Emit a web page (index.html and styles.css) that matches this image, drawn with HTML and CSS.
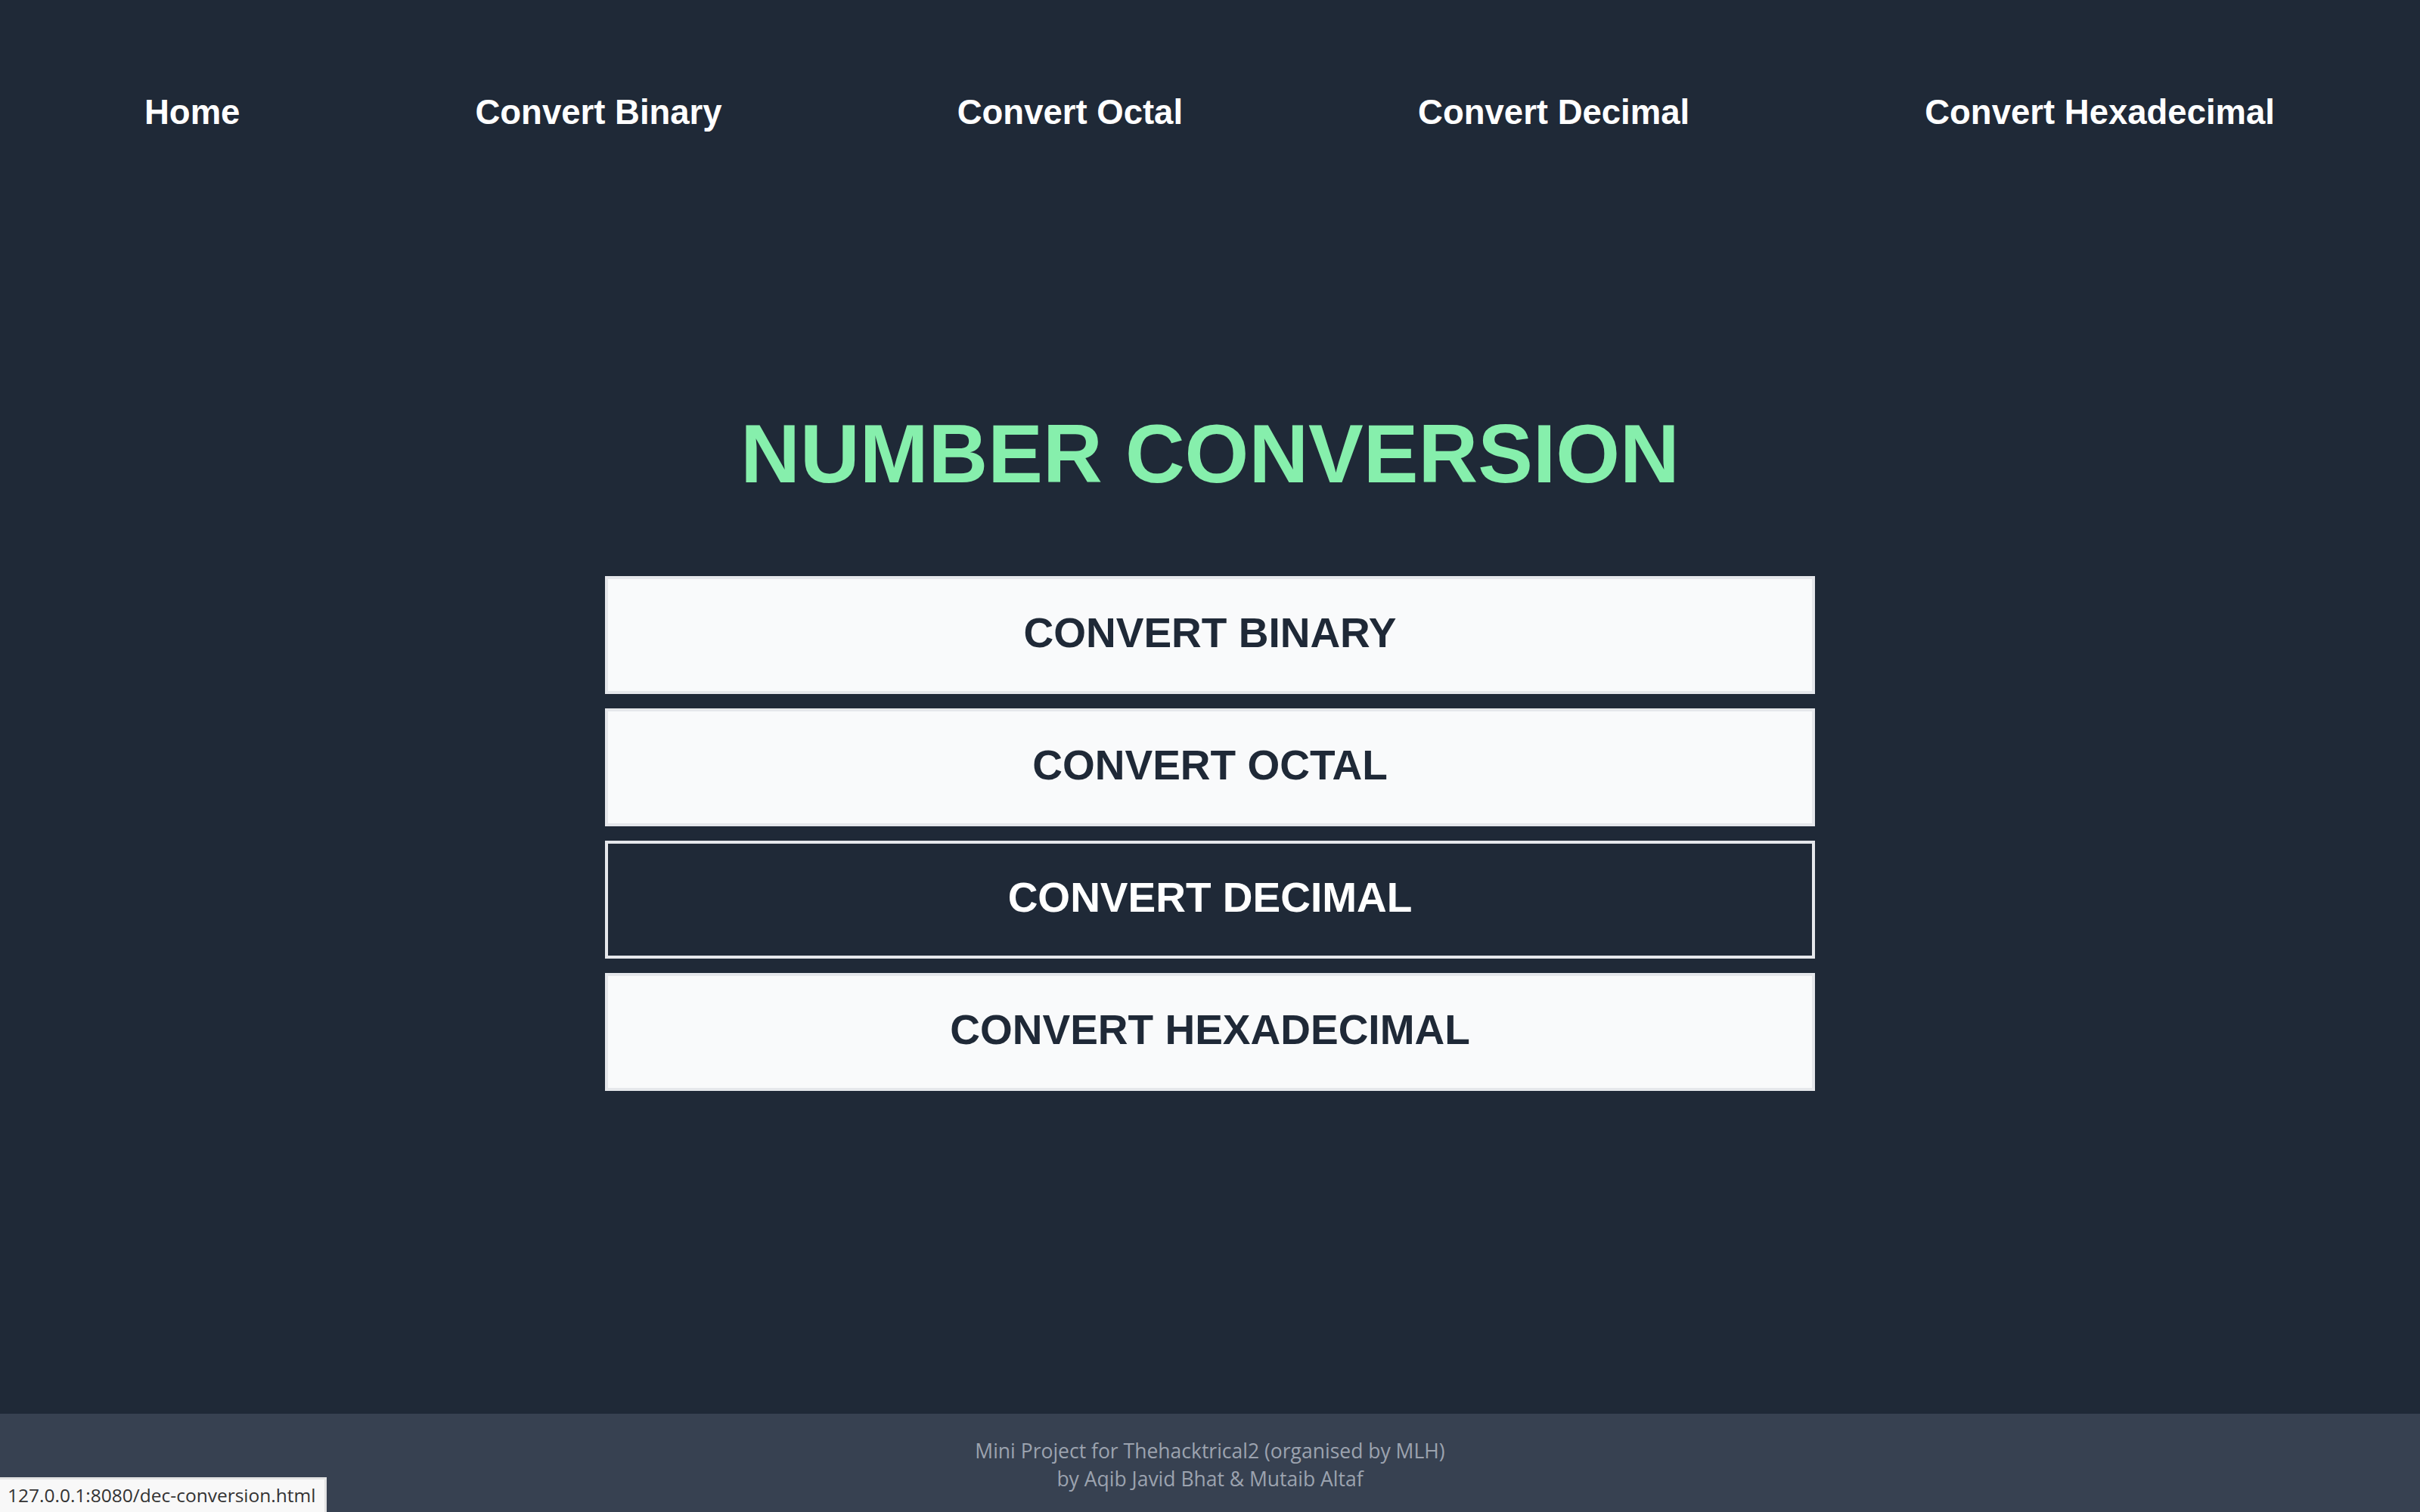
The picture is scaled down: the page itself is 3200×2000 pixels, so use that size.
FILE: index.html
```html
<!DOCTYPE html>
<html lang="en">
<head>
<meta charset="utf-8">
<title>Number Conversion</title>
<link rel="stylesheet" href="styles.css">
</head>
<body>
  <nav class="nav">
    <a class="nav-link" href="#">Home</a>
    <a class="nav-link" href="#">Convert Binary</a>
    <a class="nav-link" href="#">Convert Octal</a>
    <a class="nav-link" href="#">Convert Decimal</a>
    <a class="nav-link" href="#">Convert Hexadecimal</a>
  </nav>
  <main class="main">
    <h1 class="title">NUMBER CONVERSION</h1>
    <div class="buttons">
      <a class="btn" href="#">CONVERT BINARY</a>
      <a class="btn" href="#">CONVERT OCTAL</a>
      <a class="btn btn-active" href="#">CONVERT DECIMAL</a>
      <a class="btn" href="#">CONVERT HEXADECIMAL</a>
    </div>
  </main>
  <footer class="footer">
    <p class="footer-line">Mini Project for Thehacktrical2 (organised by MLH)</p>
    <p class="footer-line">by Aqib Javid Bhat &amp; Mutaib Altaf</p>
  </footer>
  <div class="status">127.0.0.1:8080/dec-conversion.html</div>
</body>
</html>
```

FILE: styles.css
```css
html, body {
  margin: 0;
  padding: 0;
}
body {
  background: #1f2937;
  min-height: 100vh;
  display: flex;
  flex-direction: column;
  font-family: "Liberation Sans", Arial, sans-serif;
}
.nav {
  display: flex;
  justify-content: space-between;
  padding: 123px 192px 0 191px;
}
.nav-link {
  color: #ffffff;
  text-decoration: none;
  font-weight: 700;
  font-size: 45.5px;
  line-height: 52px;
}
.main {
  flex: 1;
  display: flex;
  flex-direction: column;
  align-items: center;
}
.title {
  margin: 363px 0 0 0;
  color: #86efac;
  font-size: 109px;
  font-weight: 700;
  line-height: 124px;
}
.buttons {
  margin-top: 100px;
  width: 1600px;
  display: flex;
  flex-direction: column;
  gap: 19px;
}
.btn {
  display: block;
  box-sizing: border-box;
  height: 156px;
  padding-top: 40px;
  border: 4px solid #e5e7eb;
  background: #f9fafb;
  color: #1f2937;
  text-align: center;
  text-decoration: none;
  font-size: 55px;
  font-weight: 700;
  line-height: 62px;
}
.btn-active {
  background: #1f2937;
  color: #ffffff;
}
.footer {
  background: #374151;
  height: 130px;
  box-sizing: border-box;
  padding-top: 31px;
  text-align: center;
  font-family: "Open Sans", "Noto Sans", sans-serif;
}
.footer-line {
  margin: 0;
  color: #9ca3af;
  font-size: 26.5px;
  line-height: 37px;
}
.status {
  position: fixed;
  left: 0;
  bottom: 0;
  width: 432px;
  height: 46px;
  box-sizing: border-box;
  background: #f8f8f8;
  border-top: 3px solid #e3e3e3;
  border-right: 3px solid #e3e3e3;
  padding-left: 10px;
  color: #333333;
  font-family: "Open Sans", "Noto Sans", sans-serif;
  font-size: 24.5px;
  line-height: 42px;
  white-space: nowrap;
}
```
